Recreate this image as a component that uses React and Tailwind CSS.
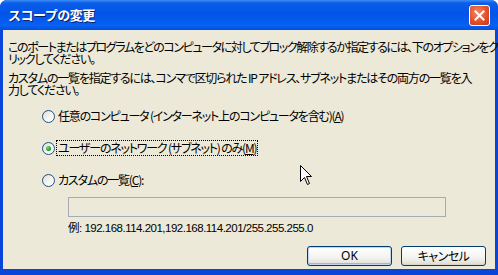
import React from 'react';

function Radio({ checked }) {
  return (
    <span className="relative flex items-center justify-center w-[13px] h-[13px] shrink-0 rounded-full border border-[#1c5180] bg-[linear-gradient(135deg,#dcdcd5_0%,#f4f3ee_50%,#ffffff_100%)]">
      {checked && (
        <span className="w-[5px] h-[5px] rounded-full bg-[radial-gradient(circle_at_35%_35%,#7ed67e_0%,#21a121_60%,#1a801a_100%)]" />
      )}
    </span>
  );
}

function XpButton({ children, isDefault }) {
  return (
    <button className={`w-[85px] h-[20px] rounded-[3px] border border-[#003c74] bg-[linear-gradient(180deg,#ffffff_0%,#f3f3ef_60%,#e3e2da_90%,#d6d0c5_100%)] text-[12px] leading-none text-black flex items-center justify-center ${isDefault ? 'shadow-[inset_0_0_0_1px_#c2d4f4,inset_0_-1px_0_1px_#98b8ea]' : ''}`}>
      {children}
    </button>
  );
}

export default function App() {
  const jp = "font-['Noto_Sans_CJK_JP',sans-serif] [font-feature-settings:'palt'] text-[12px] leading-[12px] tracking-[-1.2px] text-black whitespace-nowrap";

  return (
    <div className="w-[498px] h-[275px] bg-white">
      <div className="flex flex-col w-full h-full rounded-t-[7px] overflow-hidden bg-[#0845d8]">
        {/* title bar */}
        <div className="h-[30px] shrink-0 flex items-center justify-between pl-[8px] pr-[8px] bg-[linear-gradient(180deg,#3d8cf5_0%,#0a5ee8_10%,#0254e8_45%,#0761f2_85%,#0050dc_100%)]">
          <span className="text-white font-bold text-[13px] font-['Noto_Sans_CJK_JP',sans-serif] tracking-[-0.5px] [text-shadow:1px_1px_0_#0a1e6e]">スコープの変更</span>
          <div className="w-[21px] h-[21px] rounded-[3px] border border-white bg-[radial-gradient(circle_at_40%_35%,#f08a6a_0%,#e2512c_55%,#c2361a_100%)] flex items-center justify-center">
            <svg width="11" height="11" viewBox="0 0 11 11">
              <path d="M1.5 1.5 L9.5 9.5 M9.5 1.5 L1.5 9.5" stroke="white" strokeWidth="2" strokeLinecap="square" />
            </svg>
          </div>
        </div>

        {/* body */}
        <div className="relative flex-1 mx-[3px] mb-[6px] bg-[#ece9d8] flex flex-col pl-[5px] pt-[11px]">
          <p className={jp}>
            <span className="tracking-[-1.4px]">このポートまたはプログラムをどのコンピュータに対してブロック解除するか指定するには、下のオプションをク</span><br />
            リックしてください。
          </p>
          <p className={`${jp} mt-[7px]`}>
            カスタムの一覧を指定するには、コンマで区切られた IP アドレス、サブネットまたはその両方の一覧を入<br />
            力してください。
          </p>

          <div className="mt-[4px] ml-[34px] flex flex-col">
            <label className="h-[32px] flex items-center gap-[3px]">
              <Radio />
              <span className={jp}>任意のコンピュータ (インターネット上のコンピュータを含む)(<span className="underline">A</span>)</span>
            </label>
            <label className="h-[32px] flex items-center gap-[2px]">
              <Radio checked />
              <span className={`${jp} outline outline-1 outline-dotted outline-black px-[1px] py-[1px] leading-[12px]`}>ユーザーのネットワーク (サブネット) のみ(<span className="underline">M</span>)</span>
            </label>
            <label className="h-[32px] flex items-center gap-[3px]">
              <Radio />
              <span className={jp}>カスタムの一覧(<span className="underline">C</span>):</span>
            </label>
          </div>

          <div className="mt-[1px] ml-[60px] w-[378px] h-[20px] border border-[#a5acb2] bg-[#ece9d8]" />
          <p className="mt-[4px] ml-[60px] h-[14px] leading-[14px] text-[11.5px] tracking-[-0.5px] text-black whitespace-nowrap font-['Liberation_Sans','Noto_Sans_CJK_JP',sans-serif]">
            例: 192.168.114.201,192.168.114.201/255.255.255.0
          </p>

          <div className="mt-[11px] flex justify-end gap-[9px] pr-[9px]">
            <XpButton isDefault>OK</XpButton>
            <XpButton><span className="font-['Noto_Sans_CJK_JP',sans-serif] [font-feature-settings:'palt'] tracking-[-0.5px]">キャンセル</span></XpButton>
          </div>

          {/* mouse pointer */}
          <svg className="absolute left-[297px] top-[135px]" width="13" height="21" viewBox="0 0 13 21">
            <path d="M0.5 0.5 L0.5 16.5 L4.5 12.5 L7.5 19.5 L9.5 18.5 L6.5 11.5 L11.5 11.5 Z" fill="white" stroke="black" strokeWidth="1" strokeLinejoin="miter" />
          </svg>
        </div>
      </div>
    </div>
  );
}
